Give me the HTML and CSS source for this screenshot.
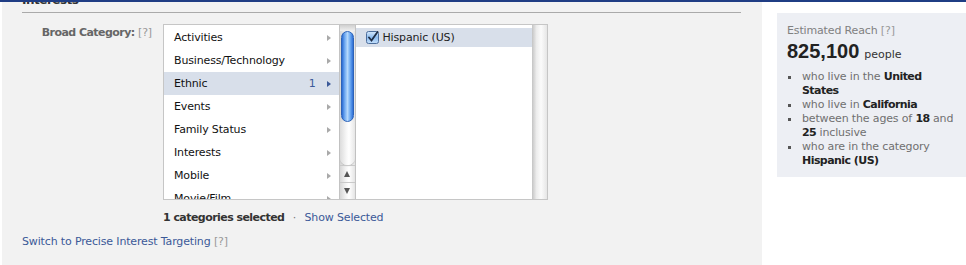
FILE: index.html
```html
<!DOCTYPE html>
<html>
<head>
    <title>Interests</title>
    <link rel="stylesheet" href="styles.css">
</head>
<body>
    <div class="topbar"></div>
    <div class="page">
        <div class="main">
            <h2 class="section-title">Interests</h2>

            <div class="field">
                <div class="field-label"><b>Broad Category:</b> <span class="help">[?]</span></div>
                <div class="field-body">
                    <div class="picker">
                        <ul class="cat-list">
                            <li>Activities<span class="arrow"></span></li>
                            <li>Business/Technology<span class="arrow"></span></li>
                            <li class="selected">Ethnic<span class="count">1</span><span class="arrow"></span></li>
                            <li>Events<span class="arrow"></span></li>
                            <li>Family Status<span class="arrow"></span></li>
                            <li>Interests<span class="arrow"></span></li>
                            <li>Mobile<span class="arrow"></span></li>
                            <li>Movie/Film<span class="arrow"></span></li>
                        </ul>
                        <div class="scrollbar">
                            <div class="sb-cap"></div>
                            <div class="sb-thumb"></div>
                            <div class="sb-track"></div>
                            <div class="sb-btn"><span class="tri-up"></span></div>
                            <div class="sb-btn"><span class="tri-down"></span></div>
                        </div>
                        <ul class="sub-list">
                            <li class="checked">
                                <svg class="check" width="13" height="13" viewBox="0 0 13 13">
                                    <defs>
                                        <linearGradient id="cbg" x1="0" y1="0" x2="0" y2="1">
                                            <stop offset="0" stop-color="#d7e9fb"/>
                                            <stop offset="0.5" stop-color="#8dbcef"/>
                                            <stop offset="1" stop-color="#c5e0fb"/>
                                        </linearGradient>
                                    </defs>
                                    <rect x="0.5" y="0.5" width="12" height="12" rx="2" fill="url(#cbg)" stroke="#4d6e9c"/>
                                    <path d="M3 6.5 L5.5 9.5 L11.5 1" fill="none" stroke="#1f2d45" stroke-width="1.8" stroke-linecap="round"/>
                                </svg>
                                Hispanic (US)
                            </li>
                        </ul>
                        <div class="track"></div>
                    </div>
                    <div class="picker-status">
                        <b>1 categories selected</b>
                        <span class="dot">&middot;</span>
                        <a href="#">Show Selected</a>
                    </div>
                </div>
            </div>

            <div class="switch">
                <a href="#">Switch to Precise Interest Targeting</a> <span class="help">[?]</span>
            </div>
        </div>

        <div class="side">
            <div class="reach">
                <div class="reach-title">Estimated Reach <span class="help">[?]</span></div>
                <div class="reach-count">825,100<span class="people">people</span></div>
                <ul class="reach-list">
                    <li>who live in the <b>United States</b></li>
                    <li>who live in <b>California</b></li>
                    <li>between the ages of <b>18</b> and <b>25</b> inclusive</li>
                    <li>who are in the category <b>Hispanic (US)</b></li>
                </ul>
            </div>
        </div>
    </div>
</body>
</html>
```

FILE: styles.css
```css
body {
    margin: 0;
    background: #fff;
    font-family: "DejaVu Sans", Verdana, sans-serif;
    font-size: 11px;
    line-height: 14px;
    letter-spacing: -0.15px;
    color: #333;
}
b {
    letter-spacing: -0.55px;
}
ul {
    margin: 0;
    padding: 0;
    list-style: none;
}
a {
    color: #3b5998;
    text-decoration: none;
}
.help {
    color: #999;
    font-weight: normal;
}

.topbar {
    height: 2px;
    background: #1f3d84;
}
.page {
    display: flex;
    height: 263px;
}

/* lewa kolumna */
.main {
    width: 719px;
    margin-left: 2px;
    padding: 0 21px 0 20px;
    background: #f2f2f2;
    overflow: hidden;
}
.section-title {
    margin: -10px 0 0 0;
    padding-bottom: 4px;
    font-size: 12px;
    line-height: 16px;
    letter-spacing: -0.5px;
    color: #333;
    border-bottom: 1px solid #aaa;
}
.field {
    display: flex;
    margin-top: 11px;
}
.field-label {
    width: 130px;
    padding: 2px 11px 0 0;
    text-align: right;
    color: #666;
}

.picker {
    display: flex;
    width: 383px;
    height: 174px;
    border: 1px solid #c6c6c6;
    background: #fff;
    overflow: hidden;
}
.cat-list {
    width: 175px;
    padding-top: 1px;
}
.cat-list li {
    display: flex;
    align-items: center;
    height: 23px;
    padding: 0 8px 0 10px;
    color: #111;
}
.cat-list li.selected {
    background: #d8dfea;
}
.count {
    margin-left: auto;
    margin-right: 11px;
    color: #3b5998;
}
.arrow {
    margin-left: auto;
    width: 0;
    height: 0;
    border-left: 4px solid #a9a9a9;
    border-top: 3.5px solid transparent;
    border-bottom: 3.5px solid transparent;
}
.count + .arrow {
    margin-left: 0;
    border-left-color: #3b5998;
}

.scrollbar {
    display: flex;
    flex-direction: column;
    width: 15px;
    border-left: 1px solid #c3c3c3;
    border-right: 1px solid #c3c3c3;
    background: linear-gradient(to right, #d6d6d6, #f4f4f4 40%, #fff 60%, #e4e4e4);
}
.sb-cap {
    height: 6px;
    background: linear-gradient(to bottom, #cfcfcf, #f0f0f0);
}
.sb-thumb {
    height: 89px;
    margin: 0 1px;
    border: 1px solid #2d63b8;
    border-radius: 7px;
    background: linear-gradient(to right, #2a6bd3, #6fa9f1 25%, #b4d8fc 50%, #6ba8f1 75%, #2e6fd6);
}
.sb-track {
    height: 43px;
    border-radius: 0 0 7px 7px;
    background: linear-gradient(to right, #dcdcdc, #f8f8f8 45%, #fff 60%, #e6e6e6);
    box-shadow: 0 1px 1px #bbb;
}
.sb-btn {
    display: flex;
    align-items: center;
    justify-content: center;
    height: 17px;
    border-top: 1px solid #c9c9c9;
    box-sizing: border-box;
}
.tri-up, .tri-down {
    width: 0;
    height: 0;
    border-left: 3.5px solid transparent;
    border-right: 3.5px solid transparent;
}
.tri-up {
    border-bottom: 6px solid #555;
}
.tri-down {
    border-top: 6px solid #555;
}

.sub-list {
    width: 177px;
    padding-top: 3px;
}
.sub-list li {
    display: flex;
    align-items: center;
    height: 19px;
    padding-left: 10px;
    color: #222;
}
.sub-list li.checked {
    background: #d8dfea;
}
.check {
    margin-right: 4px;
}
.track {
    width: 15px;
    background: linear-gradient(to right, #c4c4c4, #ececec 30%, #fbfbfb 60%, #e6e6e6);
}

.picker-status {
    margin-top: 11px;
    color: #333;
}
.dot {
    margin: 0 5px;
    color: #777;
}
.switch {
    margin-top: 10px;
}

/* prawa kolumna */
.side {
    flex: 1;
    padding: 11px 0 0 15px;
}
.reach {
    padding: 11px 10px 9px 10px;
    background: #edeff4;
}
.reach-title {
    color: #808080;
}
.reach-count {
    margin-top: 1px;
    font-family: "Liberation Sans", Arial, sans-serif;
    font-size: 20px;
    line-height: 24px;
    font-weight: bold;
    letter-spacing: 0;
    color: #222;
}
.people {
    margin-left: 5px;
    font-family: "DejaVu Sans", Verdana, sans-serif;
    font-size: 11px;
    line-height: 1;
    font-weight: normal;
    color: #333;
}
.reach-list {
    margin-top: 7px;
}
.reach-list li {
    position: relative;
    padding-left: 15px;
    color: #707070;
}
.reach-list li::before {
    content: "";
    position: absolute;
    left: 1px;
    top: 6px;
    width: 3px;
    height: 3px;
    background: #555;
}
.reach-list b {
    color: #222;
}
```
